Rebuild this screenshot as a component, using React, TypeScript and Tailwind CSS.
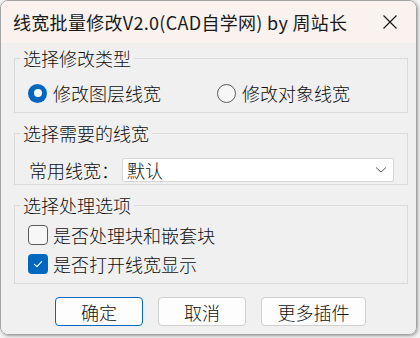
import { useState } from "react"

const font = { fontFamily: '"Noto Sans CJK SC", "Noto Sans", sans-serif' }

function Radio({ checked, label, onClick }: { checked: boolean; label: string; onClick: () => void }) {
  return (
    <button type="button" onClick={onClick} className="flex items-center gap-[6px] h-[20px]">
      {checked ? (
        <span className="w-[19px] h-[19px] rounded-full bg-[#0067c0] flex items-center justify-center">
          <span className="w-[8px] h-[8px] rounded-full bg-white" />
        </span>
      ) : (
        <span className="w-[19px] h-[19px] rounded-full border border-[#5c5c5c] bg-[#f7f7f7]" />
      )}
      <span className="text-[18px] leading-[20px] font-light text-[#111]">{label}</span>
    </button>
  )
}

function Check({ checked, label, onClick }: { checked: boolean; label: string; onClick: () => void }) {
  return (
    <button type="button" onClick={onClick} className="flex items-center gap-[5px] h-[20px]">
      {checked ? (
        <span className="w-[20px] h-[20px] rounded-[4px] bg-[#0067c0] flex items-center justify-center">
          <svg width="12" height="12" viewBox="0 0 12 12" fill="none">
            <path d="M2.5 6.3 L5 8.6 L9.6 3.6" stroke="white" strokeWidth="1.1" strokeLinecap="round" strokeLinejoin="round" />
          </svg>
        </span>
      ) : (
        <span className="w-[20px] h-[20px] rounded-[4px] border border-[#5c5c5c] bg-[#f7f7f7]" />
      )}
      <span className="text-[18px] leading-[20px] font-light text-[#111]">{label}</span>
    </button>
  )
}

export default function App() {
  const [mode, setMode] = useState<"layer" | "object">("layer")
  const [doBlocks, setDoBlocks] = useState(false)
  const [showLw, setShowLw] = useState(true)

  const legend = "ml-[5px] px-[3px] text-[18px] leading-[20px] font-light text-[#111]"
  const btn = "h-[29px] rounded-[4px] bg-[#fdfdfd] border text-[18px] leading-[20px] font-light text-[#111]"

  return (
    <div className="w-[420px] h-[338px] bg-[#f3f3f3]" style={font}>
      <div className="w-[417px] h-[335px] rounded-[8px] border border-[#a3a3a3] overflow-hidden flex flex-col shadow-[1px_1px_3px_rgba(0,0,0,0.35)]">
        {/* title bar */}
        <div className="h-[42px] bg-[#f9f2ef] flex items-center pl-[12px] pr-[18px]">
          <span className="text-[18px] leading-[20px] tracking-[0.3px] text-[#1a1a1a] flex-1">线宽批量修改V2.0(CAD自学网) by 周站长</span>
          <svg width="16" height="16" viewBox="0 0 16 16" fill="none">
            <path d="M1.5 1.5 L14.5 14.5 M14.5 1.5 L1.5 14.5" stroke="#1a1a1a" strokeWidth="1.2" />
          </svg>
        </div>

        {/* body */}
        <div className="flex-1 bg-[#f0f0f0] pl-[13px] pr-[8px] pt-[5px] flex flex-col">
          <fieldset className="border border-[#dadada] h-[65px] p-0">
            <legend className={legend}>选择修改类型</legend>
            <div className="flex items-center mt-[15px] pl-[13px]">
              <div className="w-[189px]">
                <Radio checked={mode === "layer"} label="修改图层线宽" onClick={() => setMode("layer")} />
              </div>
              <Radio checked={mode === "object"} label="修改对象线宽" onClick={() => setMode("object")} />
            </div>
          </fieldset>

          <fieldset className="border border-[#dadada] h-[62px] mt-[10px] p-0">
            <legend className={legend}>选择需要的线宽</legend>
            <div className="flex items-center mt-[15px] pl-[14px]">
              <span className="w-[93px] text-[18px] leading-[20px] font-light text-[#111]">常用线宽：</span>
              <div className="w-[272px] h-[24px] bg-white border border-[#d6d6d6] rounded-[2px] flex items-center pl-[4px] pr-[6px]">
                <span className="flex-1 text-[18px] leading-[20px] font-light text-[#111]">默认</span>
                <svg width="12" height="8" viewBox="0 0 12 8" fill="none">
                  <path d="M1 1.5 L6 6 L11 1.5" stroke="#555" strokeWidth="1" />
                </svg>
              </div>
            </div>
          </fieldset>

          <fieldset className="border border-[#dadada] h-[89px] mt-[10px] p-0">
            <legend className={legend}>选择处理选项</legend>
            <div className="flex flex-col gap-[9px] mt-[10px] pl-[13px]">
              <Check checked={doBlocks} label="是否处理块和嵌套块" onClick={() => setDoBlocks(!doBlocks)} />
              <Check checked={showLw} label="是否打开线宽显示" onClick={() => setShowLw(!showLw)} />
            </div>
          </fieldset>

          <div className="flex gap-[15px] pl-[41px] mt-[13px]">
            <button className={`${btn} w-[88px] border-[#0067c0]`}>确定</button>
            <button className={`${btn} w-[88px] border-[#d0d0d0]`}>取消</button>
            <button className={`${btn} w-[105px] border-[#d0d0d0]`}>更多插件</button>
          </div>
        </div>
      </div>
    </div>
  )
}
